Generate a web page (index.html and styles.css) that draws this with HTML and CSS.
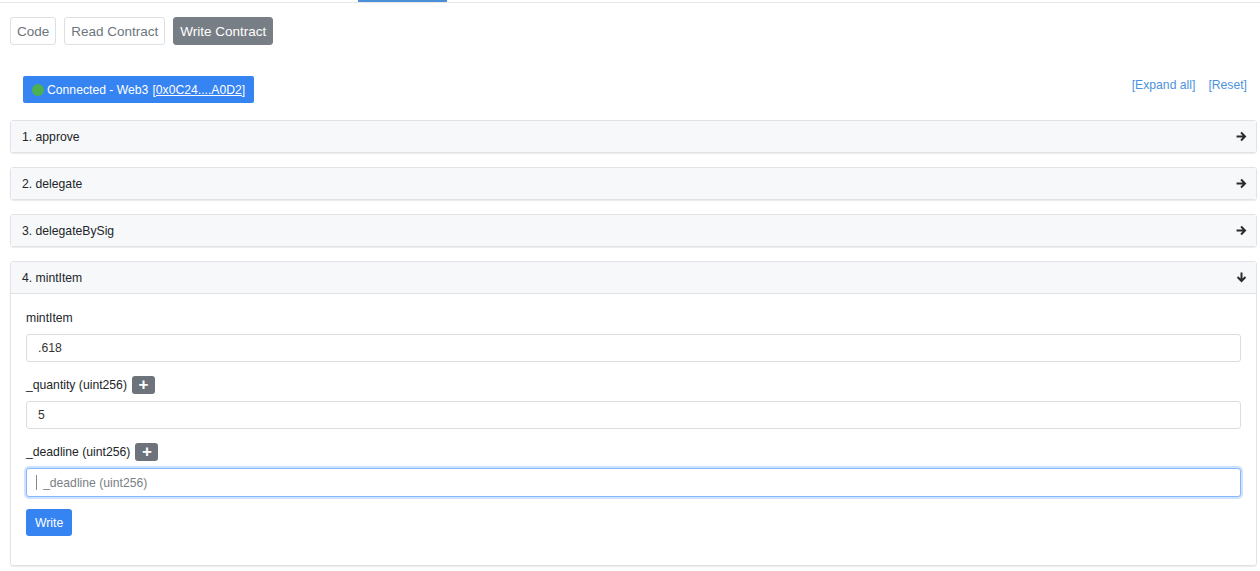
FILE: index.html
```html
<!DOCTYPE html>
<html lang="en">
    <head>
        <meta charset="UTF-8" />
        <meta name="viewport" content="width=device-width, initial-scale=1.0" />
        <title>Write Contract</title>
        <link rel="stylesheet" href="styles.css">
    </head>
    <body>
        <div class="tab-strip">
            <span class="tab-active"></span>
        </div>

        <div class="page">
            <div class="nav-buttons">
                <button class="nav-btn">Code</button>
                <button class="nav-btn">Read Contract</button>
                <button class="nav-btn nav-btn-active">Write Contract</button>
            </div>

            <div class="toolbar">
                <span class="connected">
                    <span class="dot"></span>
                    Connected - Web3 <u>[0x0C24....A0D2]</u>
                </span>
                <div class="links">
                    <a href="#">[Expand all]</a>
                    <a href="#">[Reset]</a>
                </div>
            </div>

            <div class="card">
                <div class="card-header">
                    <span>1. approve</span>
                    <svg class="arrow" width="11" height="11" viewBox="0 0 10 10"><path d="M0.5 5h7.5M4.6 1.4L8.2 5 4.6 8.6" fill="none" stroke="#2b2b2b" stroke-width="1.8"/></svg>
                </div>
            </div>

            <div class="card">
                <div class="card-header">
                    <span>2. delegate</span>
                    <svg class="arrow" width="11" height="11" viewBox="0 0 10 10"><path d="M0.5 5h7.5M4.6 1.4L8.2 5 4.6 8.6" fill="none" stroke="#2b2b2b" stroke-width="1.8"/></svg>
                </div>
            </div>

            <div class="card">
                <div class="card-header">
                    <span>3. delegateBySig</span>
                    <svg class="arrow" width="11" height="11" viewBox="0 0 10 10"><path d="M0.5 5h7.5M4.6 1.4L8.2 5 4.6 8.6" fill="none" stroke="#2b2b2b" stroke-width="1.8"/></svg>
                </div>
            </div>

            <div class="card">
                <div class="card-header">
                    <span>4. mintItem</span>
                    <svg class="arrow" width="11" height="11" viewBox="0 0 10 10"><path d="M5 0.5v7.5M1.4 4.6L5 8.2 8.6 4.6" fill="none" stroke="#2b2b2b" stroke-width="1.8"/></svg>
                </div>
                <div class="card-body">
                    <div class="field">
                        <div class="field-label">mintItem</div>
                        <input class="field-input" type="text" value=".618" />
                    </div>
                    <div class="field">
                        <div class="field-label">_quantity (uint256) <span class="plus">+</span></div>
                        <input class="field-input" type="text" value="5" />
                    </div>
                    <div class="field field-last">
                        <div class="field-label">_deadline (uint256) <span class="plus">+</span></div>
                        <div class="input-wrap">
                            <input class="field-input field-focus" type="text" placeholder="_deadline (uint256)" />
                            <span class="caret"></span>
                        </div>
                    </div>
                    <button class="write-btn">Write</button>
                </div>
            </div>
        </div>
    </body>
</html>
```
FILE: styles.css
```css
* {
    box-sizing: border-box;
}

body {
    margin: 0;
    font-family: "Liberation Sans", Arial, sans-serif;
    font-size: 12.2px;
    color: #212529;
    background-color: #fff;
}

.tab-strip {
    height: 3px;
    border-bottom: 1px solid #e6e6e6;
    padding-left: 358px;
}

.tab-active {
    display: block;
    width: 89px;
    height: 2px;
    background-color: #4a8fd8;
}

.page {
    padding: 14px 3px 0 10px;
}

.nav-buttons {
    display: flex;
    gap: 8px;
}

.nav-btn {
    height: 28px;
    padding: 0 6px;
    font-family: inherit;
    font-size: 13.5px;
    color: #6c757d;
    background-color: #fff;
    border: 1px solid #dcdfe3;
    border-radius: 3px;
}

.nav-btn-active {
    color: #fff;
    background-color: #787e86;
    border-color: #787e86;
}

.toolbar {
    display: flex;
    justify-content: space-between;
    align-items: flex-start;
    margin: 31px 0 17px 13px;
}

.connected {
    display: inline-flex;
    align-items: center;
    height: 27px;
    padding: 0 9px;
    color: #fff;
    background-color: #3584f2;
    border-radius: 2px;
}

.connected u {
    margin-left: 4px;
}

.dot {
    width: 12px;
    height: 12px;
    margin-right: 3px;
    border-radius: 50%;
    background-color: #4caf50;
}

.links {
    display: flex;
    gap: 13px;
    margin-top: 2px;
    margin-right: 10px;
}

.links a {
    color: #4d93dc;
    text-decoration: none;
}

.card {
    border: 1px solid #e1e3e6;
    border-radius: 3px;
    margin-bottom: 14px;
    box-shadow: 0 1px 1px rgba(0, 0, 0, 0.08);
}

.card-header {
    display: flex;
    justify-content: space-between;
    align-items: center;
    height: 31px;
    padding: 0 9px 0 11px;
    background-color: #f7f8f9;
}

.card-body {
    padding: 14px 15px 29px;
    border-top: 1px solid #e1e3e6;
}

.field {
    margin-bottom: 13px;
}

.field-last {
    margin-bottom: 12px;
}

.field-label {
    display: flex;
    align-items: center;
    gap: 5px;
    height: 20px;
    margin-bottom: 6px;
}

.plus {
    display: inline-flex;
    justify-content: center;
    align-items: center;
    width: 23px;
    height: 18px;
    font-size: 17px;
    font-weight: bold;
    color: #fff;
    background-color: #6c737b;
    border-radius: 3px;
}

.field-input {
    display: block;
    width: 100%;
    height: 28px;
    padding: 0 11px;
    font-family: inherit;
    font-size: 12.2px;
    color: #333;
    border: 1px solid #dadde1;
    border-radius: 3px;
    outline: none;
}

.input-wrap {
    position: relative;
}

.field-focus {
    height: 29px;
    padding-left: 16px;
    border-color: #86b7fe;
    box-shadow: 0 0 0 2px rgba(13, 110, 253, 0.2);
}

.field-focus::placeholder {
    color: #7a7f85;
}

.caret {
    position: absolute;
    left: 10px;
    top: 7px;
    width: 1px;
    height: 15px;
    background-color: #888;
}

.write-btn {
    height: 27px;
    padding: 0 9px;
    font-family: inherit;
    font-size: 12.2px;
    color: #fff;
    background-color: #3584f2;
    border: none;
    border-radius: 3px;
}
```
